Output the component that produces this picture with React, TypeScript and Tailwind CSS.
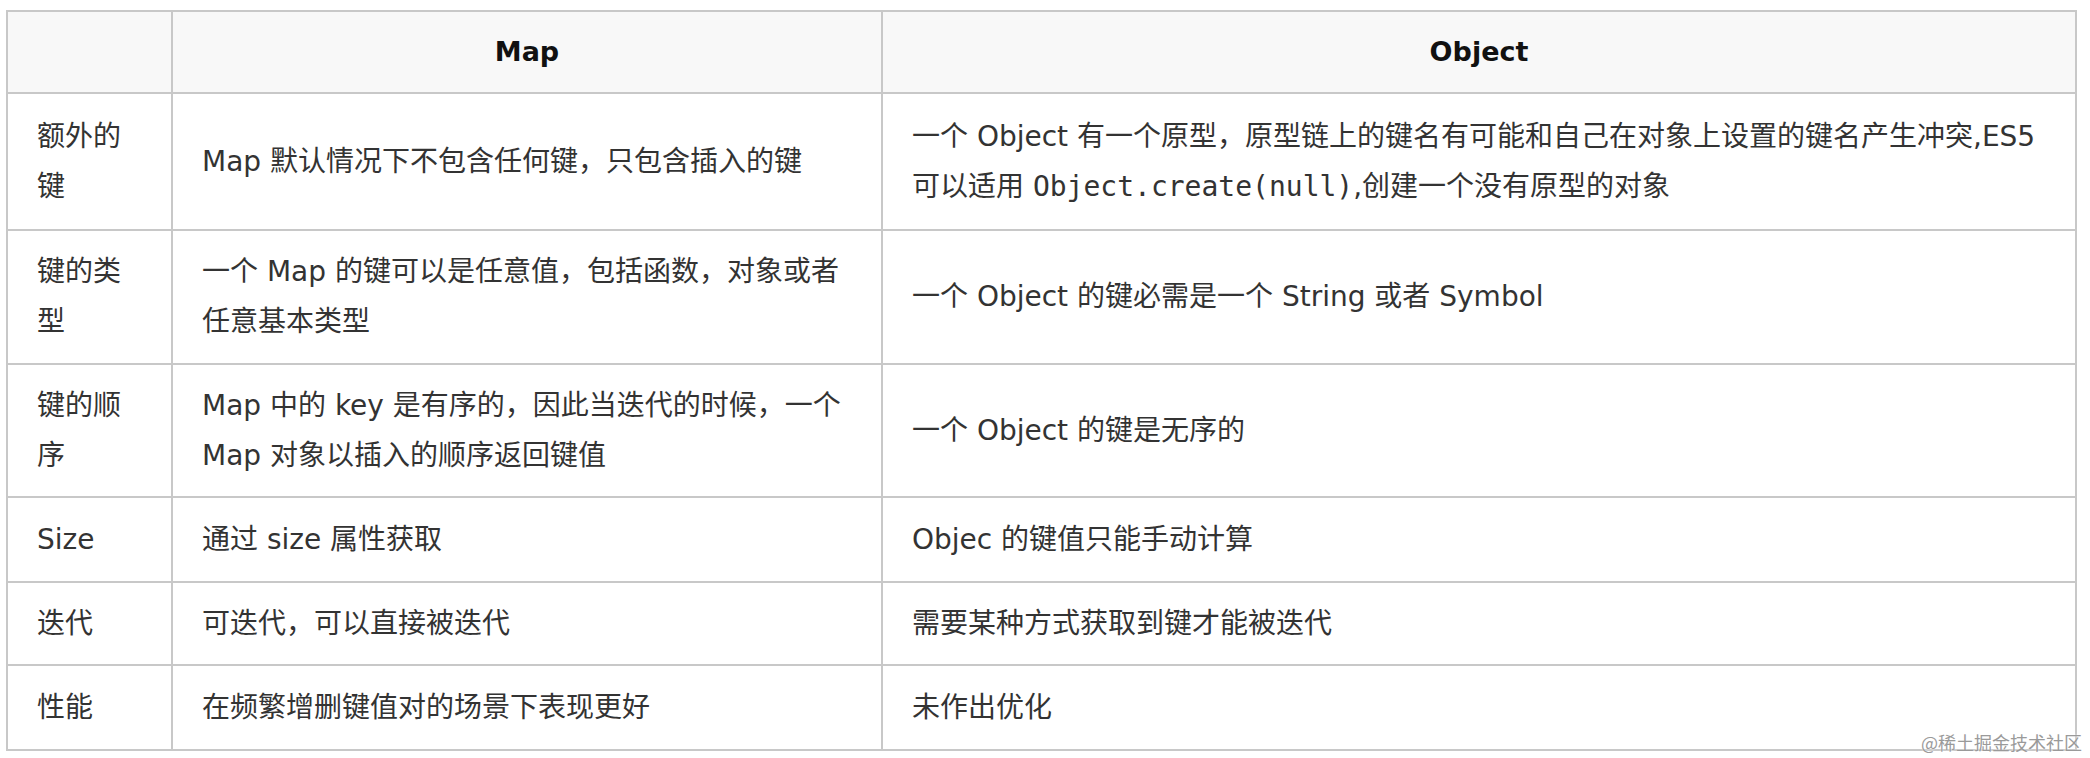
import React from "react";

type Row = {
  key: React.ReactNode;
  map: React.ReactNode;
  obj: React.ReactNode;
  h: string;
};

const code = "font-['DejaVu_Sans_Mono','Liberation_Mono',monospace] text-[28px]";

const rows: Row[] = [
  {
    key: (
      <>
        额外的
        <br />键
      </>
    ),
    map: "Map 默认情况下不包含任何键，只包含插入的键",
    obj: (
      <>
        一个 Object 有一个原型，原型链上的键名有可能和自己在对象上设置的键名产生冲突,ES5
        <br />
        可以适用 <span className={code}>Object.create(null)</span>,创建一个没有原型的对象
      </>
    ),
    h: "h-[137px]",
  },
  {
    key: (
      <>
        键的类
        <br />型
      </>
    ),
    map: (
      <>
        一个 Map 的键可以是任意值，包括函数，对象或者
        <br />
        任意基本类型
      </>
    ),
    obj: "一个 Object 的键必需是一个 String 或者 Symbol",
    h: "h-[134px]",
  },
  {
    key: (
      <>
        键的顺
        <br />序
      </>
    ),
    map: (
      <>
        Map 中的 key 是有序的，因此当迭代的时候，一个
        <br />
        Map 对象以插入的顺序返回键值
      </>
    ),
    obj: "一个 Object 的键是无序的",
    h: "h-[133px]",
  },
  { key: "Size", map: "通过 size 属性获取", obj: "Objec 的键值只能手动计算", h: "h-[85px]" },
  { key: "迭代", map: "可迭代，可以直接被迭代", obj: "需要某种方式获取到键才能被迭代", h: "h-[83px]" },
  { key: "性能", map: "在频繁增删键值对的场景下表现更好", obj: "未作出优化", h: "h-[85px]" },
];

const cell = "border-2 border-[#c8c8c8] px-[29px] align-middle text-left whitespace-nowrap";

export default function App() {
  return (
    <div className="relative w-[2090px] h-[758px] bg-white overflow-hidden">
      <table className="table-fixed border-collapse w-[2071px] ml-[6px] mt-[10px] font-['DejaVu_Sans','Noto_Sans_CJK_SC',sans-serif] text-[28px] leading-[50px] text-[#333]">
        <colgroup>
          <col className="w-[165px]" />
          <col className="w-[710px]" />
          <col />
        </colgroup>
        <thead>
          <tr className="h-[82px] bg-[#f8f8f8]">
            <th className="border-2 border-[#c8c8c8]" />
            <th className="border-2 border-[#c8c8c8] font-bold text-[27px] text-[#111] text-center">Map</th>
            <th className="border-2 border-[#c8c8c8] font-bold text-[27px] text-[#111] text-center">Object</th>
          </tr>
        </thead>
        <tbody>
          {rows.map((r, i) => (
            <tr key={i} className={r.h}>
              <td className={cell}>{r.key}</td>
              <td className={cell}>{r.map}</td>
              <td className={cell}>{r.obj}</td>
            </tr>
          ))}
        </tbody>
      </table>
      <div className="absolute right-[8px] top-[732px] text-[18px] leading-[20px] text-[#9a9a9a] font-['Noto_Sans_CJK_SC',sans-serif] [text-shadow:0_0_2px_#fff]">
        @稀土掘金技术社区
      </div>
    </div>
  );
}
